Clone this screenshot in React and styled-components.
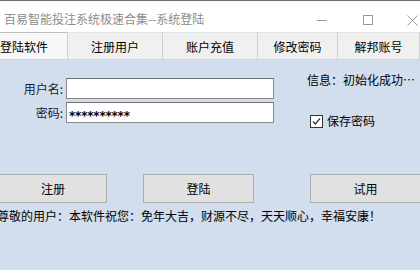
import React from 'react';
import styled, { createGlobalStyle } from 'styled-components';

const Global = createGlobalStyle`
  html, body {
    margin: 0;
    padding: 0;
    background: #ffffff;
  }
  body {
    font-family: "Noto Sans CJK SC", "Microsoft YaHei", sans-serif;
    font-size: 12px;
    color: #000;
  }
`

const Window = styled.div`
  width: 420px;
  height: 280px;
  overflow: hidden;
  display: flex;
  flex-direction: column;
  background: #ffffff;
`

const TitleBar = styled.div`
  height: 32px;
  flex: none;
  border-top: 1px solid #6e6e6e;
  display: flex;
  align-items: center;
  padding: 5px 2px 0 4px;
  box-sizing: border-box;
  background: #ffffff;
`

const Title = styled.div`
  flex: 1;
  color: #8c8c8c;
  font-size: 12px;
  line-height: 14px;
  white-space: nowrap;
`

const Controls = styled.div`
  display: flex;
  align-items: center;
  padding-top: 2px;
`

const Control = styled.div`
  width: 11px;
  margin-left: ${p => p.$gap}px;
  display: flex;
  justify-content: center;
  align-items: center;
`

const TabStrip = styled.div`
  height: 27px;
  flex: none;
  display: flex;
  background: #f0f0f0;
  border-bottom: 1px solid #d4d4d4;
`

const Tab = styled.div`
  width: ${p => p.$w}px;
  flex: none;
  display: flex;
  align-items: center;
  justify-content: ${p => (p.$first ? 'flex-start' : 'center')};
  box-sizing: border-box;
  border-right: 1px solid #cfcfcf;
  background: ${p => (p.$active ? '#f7f7f7' : '#f0f0f0')};
  border-top: 1px solid ${p => (p.$active ? '#bdbdbd' : '#e3e3e3')};
  font-size: 12px;
  line-height: 14px;
  padding-top: 1px;
  white-space: nowrap;
`

const Content = styled.div`
  height: 210px;
  flex: none;
  background: #d2deee;
  box-sizing: border-box;
  padding-top: 13px;
  display: flex;
  flex-direction: column;
`

const Upper = styled.div`
  display: flex;
`

const Form = styled.div`
  margin-top: 5px;
  display: grid;
  grid-template-columns: 63px 208px;
  grid-auto-rows: 21px;
  column-gap: 3px;
  row-gap: 3px;
`

const Label = styled.div`
  display: flex;
  align-items: center;
  justify-content: flex-end;
  font-size: 12px;
  color: #1a1a1a;
`

const Input = styled.div`
  box-sizing: border-box;
  background: #ffffff;
  border: 1px solid #8a8a8a;
  border-top-color: #707070;
  display: flex;
  align-items: center;
  padding-left: 2px;
  font-family: "DejaVu Sans", sans-serif;
  font-size: 12px;
  font-weight: bold;
  letter-spacing: -0.2px;
  padding-top: 6px;
`

const Side = styled.div`
  margin-left: 33px;
  display: flex;
  flex-direction: column;
`

const Info = styled.div`
  font-size: 12px;
  line-height: 14px;
  white-space: nowrap;
`

const CheckRow = styled.div`
  margin-top: 27px;
  margin-left: 3px;
  display: flex;
  align-items: center;
  gap: 4px;
  font-size: 12px;
  line-height: 14px;
`

const Box = styled.div`
  width: 13px;
  height: 13px;
  box-sizing: border-box;
  border: 1px solid #333333;
  background: #ffffff;
  display: flex;
  align-items: center;
  justify-content: center;
`

const Buttons = styled.div`
  margin-top: 46px;
  display: flex;
`

const Button = styled.div`
  width: ${p => p.$w}px;
  margin-left: ${p => p.$ml}px;
  height: 29px;
  flex: none;
  box-sizing: border-box;
  background: #e1e1e1;
  border: 1px solid #adadad;
  display: flex;
  align-items: center;
  justify-content: center;
  font-size: 12px;
`

const Footer = styled.div`
  margin-top: 6px;
  margin-left: -3px;
  font-size: 12px;
  line-height: 14px;
  white-space: nowrap;
`

export default function App() {
  return (
    <>
      <Global />
      <Window>
        <TitleBar>
          <Title>百易智能投注系统极速合集--系统登陆</Title>
          <Controls>
            <Control $gap={0}>
              <svg width="10" height="10" viewBox="0 0 10 10">
                <path d="M0 5.5h10" stroke="#999" strokeWidth="1" />
              </svg>
            </Control>
            <Control $gap={35}>
              <svg width="10" height="10" viewBox="0 0 10 10">
                <rect x="0.5" y="0.5" width="9" height="9" fill="none" stroke="#999" />
              </svg>
            </Control>
            <Control $gap={34}>
              <svg width="11" height="11" viewBox="0 0 11 11">
                <path d="M0.5 0.5l10 10M10.5 0.5l-10 10" stroke="#999" strokeWidth="1" />
              </svg>
            </Control>
          </Controls>
        </TitleBar>
        <TabStrip>
          <Tab $w={68} $first $active>登陆软件</Tab>
          <Tab $w={95}>注册用户</Tab>
          <Tab $w={95}>账户充值</Tab>
          <Tab $w={80}>修改密码</Tab>
          <Tab $w={82}>解邦账号</Tab>
        </TabStrip>
        <Content>
          <Upper>
            <Form>
              <Label>用户名:</Label>
              <Input />
              <Label>密码:</Label>
              <Input>**********</Input>
            </Form>
            <Side>
              <Info>信息：初始化成功…</Info>
              <CheckRow>
                <Box>
                  <svg width="9" height="9" viewBox="0 0 9 9">
                    <path d="M1 4.5l2.3 2.5L8 1.5" fill="none" stroke="#333" strokeWidth="1.2" />
                  </svg>
                </Box>
                保存密码
              </CheckRow>
            </Side>
          </Upper>
          <Buttons>
            <Button $w={108} $ml={-1}>注册</Button>
            <Button $w={111} $ml={36}>登陆</Button>
            <Button $w={111} $ml={56}>试用</Button>
          </Buttons>
          <Footer>尊敬的用户：本软件祝您：免年大吉，财源不尽，天天顺心，幸福安康！</Footer>
        </Content>
      </Window>
    </>
  );
}
